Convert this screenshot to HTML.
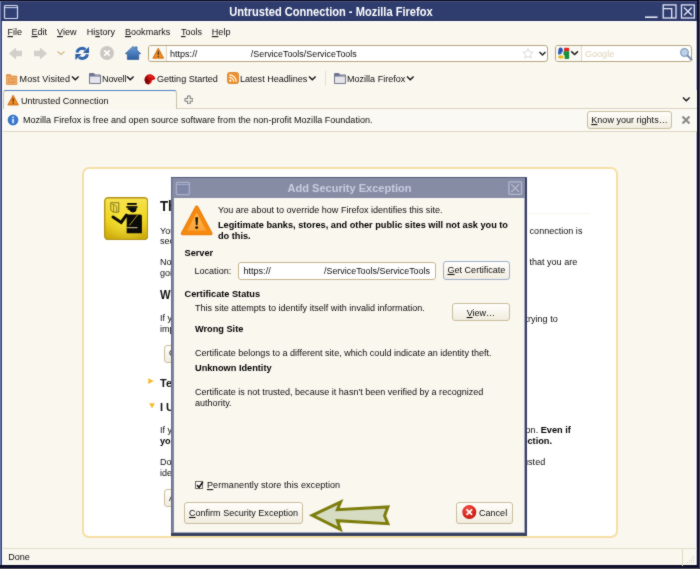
<!DOCTYPE html>
<html><head><meta charset="utf-8"><title>Untrusted Connection - Mozilla Firefox</title>
<style>
html,body{margin:0;padding:0;}
body{width:700px;height:569px;overflow:hidden;position:relative;background:#faf7ef;font-family:"Liberation Sans",sans-serif;font-size:9.05px;color:#0c0c0c;}
.a{position:absolute;white-space:nowrap;}
.t{position:absolute;white-space:nowrap;line-height:12px;transform:scaleY(1.07);transform-origin:0 9px;}
.btn>span{display:inline-block;transform:scaleY(1.07);transform-origin:50% 72%;}
u{text-decoration:underline;}
.b{font-weight:bold;font-size:9.2px;color:#000;}
.btn{position:absolute;box-sizing:border-box;border:1px solid #c9bd9c;border-radius:3px;background:linear-gradient(#fffefb,#f1ecdf);text-align:center;white-space:nowrap;}
body{filter:url(#soft);}
</style></head><body><svg width="0" height="0" style="position:absolute"><defs><filter id="soft" x="0" y="0" width="100%" height="100%" color-interpolation-filters="sRGB"><feConvolveMatrix order="3" kernelMatrix="0.5 1 0.5 1 10 1 0.5 1 0.5" divisor="16" edgeMode="duplicate" preserveAlpha="true"/></filter></defs></svg>
<!-- window frame -->
<div class="a" id="frame" style="left:0;top:0;width:700px;height:569px;background:#0d0f2a;"></div>
<div class="a" style="left:0;top:567.700px;width:700px;height:1.300px;background:#5e606c;"></div>
<div class="a" style="left:698.600px;top:0;width:1.400px;height:569px;background:#464859;"></div>
<div class="a" style="left:0;top:0.800px;width:697px;height:1.200px;background:#4a5278;"></div>
<div class="a" id="titlebar" style="left:0;top:2px;width:697px;height:19px;background:linear-gradient(#2f3c6e 0,#2f3c6e 17.400px,#27325d 17.800px);"></div>
<div class="a" style="left:0;top:1px;width:1px;height:564.300px;background:#6a78aa;"></div>
<div class="a" style="left:1px;top:20.800px;width:1.100px;height:544.500px;background:#2f3b6c;"></div>
<div class="a" id="client" style="left:2.100px;top:20.800px;width:694.300px;height:544.200px;background:#fff;"></div>
<div class="a" style="left:696px;top:20.800px;width:0.900px;height:544.200px;background:#b5b9cc;"></div>
<div class="a" style="left:3.400px;top:21.900px;width:691.400px;height:543.100px;background:#faf7ef;"></div>
<div class="t b" id="title" style="transform-origin:50% 9.700px;left:0;width:662px;top:6px;text-align:center;font-size:11.1px;color:#fff;">Untrusted Connection - Mozilla Firefox</div>
<!-- window icon -->
<svg class="a" style="left:3px;top:4px" width="16" height="16" viewBox="0 0 16 16"><rect x="1.500" y="1.500" width="13" height="13" rx="1" fill="#323f74" stroke="#d6daf0" stroke-width="1.200"/><line x1="2" y1="3.600" x2="14" y2="3.600" stroke="#d6daf0" stroke-width="1"/></svg>
<!-- window buttons -->
<svg class="a" style="left:640px;top:2px" width="58" height="18" viewBox="0 0 58 18"><g fill="none" stroke="#e4e7f6" stroke-width="1.300"><line x1="5" y1="15.200" x2="17.500" y2="15.200" stroke-width="1.600"/><rect x="23.200" y="2.900" width="12.800" height="13.100"/><path d="M23.200 6.700h8.500v9.300"/><rect x="41.500" y="2.900" width="12.800" height="13.100"/><path d="M44 5.500l7.800 7.800M51.800 5.500l-7.800 7.800"/></g></svg>

<!-- menu bar -->
<div class="t" style="left:7.500px;top:25.800px"><u>F</u>ile</div>
<div class="t" style="left:31.500px;top:25.800px"><u>E</u>dit</div>
<div class="t" style="left:57px;top:25.800px"><u>V</u>iew</div>
<div class="t" style="left:86.800px;top:25.800px">Hi<u>s</u>tory</div>
<div class="t" style="left:125px;top:25.800px"><u>B</u>ookmarks</div>
<div class="t" style="left:181px;top:25.800px"><u>T</u>ools</div>
<div class="t" style="left:211.800px;top:25.800px"><u>H</u>elp</div>

<!-- nav toolbar -->
<svg class="a" style="left:6px;top:44px" width="140" height="18" viewBox="0 0 140 18"><defs><linearGradient id="hg" x1="0" y1="0" x2="0" y2="1"><stop offset="0" stop-color="#6b9bd8"/><stop offset="1" stop-color="#2d5e9f"/></linearGradient></defs>
 <path d="M3 9.500l7-6v3.200h6v5.600h-6v3.200z" fill="#d1cfca"/>
 <path d="M41 9.500l-7-6v3.200h-6v5.600h6v3.200z" fill="#d1cfca"/>
 <path d="M51.500 7.500l3.500 3 3.500-3" fill="none" stroke="#d0b680" stroke-width="1.1"/>
 <g id="reload" transform="translate(0,0.400)" fill="none" stroke="#2d64ad" stroke-width="3"><path d="M71 8.200a5.200 5.200 0 0 1 8.500-3"/><path d="M81.400 9.800a5.200 5.200 0 0 1-8.500 3"/><path d="M83 2.300v6.200h-6.200z" fill="#2a5fa6" stroke="none"/><path d="M69.400 15.700v-6.200h6.200z" fill="#2a5fa6" stroke="none"/></g>
 <circle cx="101" cy="9" r="7" fill="#cbc8c3"/><path d="M98.300 6.300l5.400 5.400M103.700 6.300l-5.400 5.400" stroke="#fff" stroke-width="1.700"/>
 <g id="home"><path d="M119.300 9.700l7.800-7.300 2.100 2v-1.500h1.800v3.200l3.800 3.600h-2.100v5.700h-11.300v-5.700z" fill="url(#hg)" stroke="#2b5a9a" stroke-width="0.700" stroke-linejoin="round"/></g>
</svg>
<!-- url bar -->
<div class="a" style="left:148px;top:45px;width:400px;height:17px;box-sizing:border-box;border:1px solid #b5a67e;border-radius:3px;background:#fff;"></div>
<div class="a" style="left:149px;top:46px;width:17.300px;height:15px;background:#fbf9f4;border-right:1px solid #ddd5c0;border-radius:2px 0 0 2px"></div>
<svg class="a" style="left:152px;top:47px" width="12.500" height="12.500" viewBox="0 0 14 14"><path d="M7 1.500L13 12.500H1z" fill="#f08a24" stroke="#c8660c" stroke-width="1" stroke-linejoin="round"/><rect x="6.400" y="5" width="1.300" height="4" fill="#3a2a10"/><rect x="6.400" y="10" width="1.300" height="1.300" fill="#3a2a10"/></svg>
<div class="t" style="left:170px;top:47.500px">https://</div>
<div class="t" style="left:250.800px;top:47.500px;font-size:8.920px">/ServiceTools/ServiceTools</div>
<svg class="a" style="left:520px;top:46px" width="30" height="15" viewBox="0 0 30 15"><path d="M8 2.600l1.500 3.200 3.500.4-2.600 2.400.7 3.500-3.100-1.800-3.100 1.800.7-3.500-2.600-2.400 3.500-.4z" fill="#fff" stroke="#cfcfcf" stroke-width="0.800"/><path d="M19.500 6l3 3 3-3" fill="none" stroke="#222" stroke-width="1.500"/></svg>
<!-- search box -->
<div class="a" style="left:555px;top:45px;width:137px;height:17px;box-sizing:border-box;border:1px solid #b5a67e;border-radius:3px;background:#fff;"></div>
<div class="a" style="left:556px;top:46px;width:25px;height:15px;background:#fbf9f4;border-right:1px solid #e2dac6;border-radius:2px 0 0 2px"></div>
<svg class="a" style="left:557px;top:46px" width="26" height="15" viewBox="0 0 26 15"><ellipse cx="3.600" cy="4.200" rx="2.200" ry="2.700" fill="#2456b8"/><path d="M0.800 5.300l4.200 2.400-3.600 1z" fill="#2456b8"/><ellipse cx="3.800" cy="11" rx="2.800" ry="1.700" fill="#e9b818"/><path d="M7.200 1.700h4a1 1 0 0 1 1 1v2.800h-5.200z" fill="#e0281e"/><path d="M6.600 5.300h5.600v6.600a1 1 0 0 1-1 1h-3.600v-3.500l-1.200-1z" fill="#17903a"/><path d="M14.300 5.400l3.300 3.100 3.300-3.100" fill="none" stroke="#1a1a1a" stroke-width="1.500"/></svg>
<div class="t" style="left:585px;top:47.500px;color:#dbd2b6">Google</div>
<svg class="a" style="left:678.500px;top:46.500px" width="14" height="14" viewBox="0 0 14 14"><circle cx="5.500" cy="5.500" r="3.800" fill="#bcd2ea" stroke="#8aa0bd" stroke-width="1.300"/><path d="M8.500 8.500l4 4" stroke="#7a8fae" stroke-width="2" stroke-linecap="round"/></svg>

<!-- bookmarks toolbar -->
<svg class="a" style="left:5.200px;top:72px" width="14" height="14" viewBox="0 0 14 14"><path d="M1.600 2.600h3.800l1 1.500h5.400v8.300h-10.200z" fill="#eb9d55" stroke="#d98a3e" stroke-width="0.800"/><path d="M2.200 5h9v6.800h-9z" fill="#f2b377"/><rect x="3.700" y="6.300" width="6.200" height="4.300" fill="none" stroke="#d98a3e" stroke-width="0.800"/><circle cx="6.800" cy="8.500" r="1.200" fill="none" stroke="#d98a3e" stroke-width="0.700"/></svg>
<div class="t" style="left:19.500px;top:73.400px;letter-spacing:0.130px">Most Visited</div>
<svg class="a" style="left:71px;top:75px" width="9" height="7" viewBox="0 0 9 7"><path d="M1 1.500l3.300 3.300 3.300-3.300" fill="none" stroke="#111" stroke-width="1.350"/></svg>
<svg class="a" style="left:88px;top:71px" width="14" height="14" viewBox="0 0 14 14"><path d="M1.500 2.500h4.500l1 1.500h5.500v8.500h-11z" fill="#e4e4ea" stroke="#666a82" stroke-width="0.900"/><path d="M1.900 2.900h4l1 1.500h5.200v1.200h-10.200z" fill="#6d7292"/></svg>
<div class="t" style="left:102px;top:73.400px;letter-spacing:-0.150px">Novell</div>
<svg class="a" style="left:126px;top:75px" width="9" height="7" viewBox="0 0 9 7"><path d="M1 1.500l3.300 3.300 3.300-3.300" fill="none" stroke="#111" stroke-width="1.350"/></svg>
<svg class="a" style="left:143px;top:72px" width="14" height="14" viewBox="0 0 14 14"><path d="M1.600 8.500c-.3-3.200 2-6 5-6.200 2.300-.1 4 1.300 5.800 3.700l-.5 1.300-3 1.200-.8 2.600-2.600 1.300-2.600-.8z" fill="#cf0c0c"/><path d="M1.600 8.500c0-1.800.8-3.800 2-4.800l.6 3.300 2.300 1.500-1 3.900-2.600-.8z" fill="#7d0505"/><path d="M6 4.200l2.500.6 1.700 1.600" fill="none" stroke="#f04a3a" stroke-width="0.800"/></svg>
<div class="t" style="left:157px;top:73.400px">Getting Started</div>
<svg class="a" style="left:227px;top:72px" width="12" height="12" viewBox="0 0 12 12"><rect x="0.500" y="0.500" width="11" height="11" rx="2" fill="#f0902a" stroke="#d0721a" stroke-width="0.700"/><circle cx="3.300" cy="8.700" r="1.100" fill="#fff"/><path d="M2.200 5.300a4.500 4.500 0 0 1 4.500 4.500M2.200 2.800a7 7 0 0 1 7 7" fill="none" stroke="#fff" stroke-width="1.200"/></svg>
<div class="t" style="left:240px;top:73.400px">Latest Headlines</div>
<svg class="a" style="left:308px;top:75px" width="9" height="7" viewBox="0 0 9 7"><path d="M1 1.500l3.300 3.300 3.300-3.300" fill="none" stroke="#111" stroke-width="1.350"/></svg>
<div class="a" style="left:324.600px;top:71px;width:1px;height:15px;background:#e6dfcd"></div>
<svg class="a" style="left:333px;top:71px" width="14" height="14" viewBox="0 0 14 14"><path d="M1.500 2.500h4.500l1 1.500h5.500v8.500h-11z" fill="#e4e4ea" stroke="#666a82" stroke-width="0.900"/><path d="M1.900 2.900h4l1 1.500h5.200v1.200h-10.200z" fill="#6d7292"/></svg>
<div class="t" style="left:347px;top:73.400px">Mozilla Firefox</div>
<svg class="a" style="left:406px;top:75px" width="9" height="7" viewBox="0 0 9 7"><path d="M1 1.500l3.300 3.300 3.300-3.300" fill="none" stroke="#111" stroke-width="1.350"/></svg>

<!-- tab bar -->
<div class="a" style="left:3px;top:90px;width:694px;height:19px;background:#faf7ef;"></div>
<div class="a" style="left:3px;top:108px;width:694px;height:1px;background:#d9d2bf;"></div>
<div class="a" id="tab" style="left:3px;top:90px;width:174px;height:19px;box-sizing:border-box;background:#faf7ef;border:1px solid #c9c0a8;border-bottom:none;border-top:1.700px solid #4f80c2;border-radius:3px 3px 0 0;"></div>
<svg class="a" style="left:6.860px;top:94.400px" width="12.250" height="12.250" viewBox="0 0 14 14"><path d="M7 1.500L13 12.500H1z" fill="#f08a24" stroke="#c8660c" stroke-width="1" stroke-linejoin="round"/><rect x="6.400" y="5" width="1.300" height="4" fill="#3a2a10"/><rect x="6.400" y="10" width="1.300" height="1.300" fill="#3a2a10"/></svg>
<div class="t" style="left:21px;top:95px">Untrusted Connection</div>
<svg class="a" style="left:183.600px;top:94.600px" width="9.800" height="9.800" viewBox="0 0 11 11"><path d="M4 1h3v3h3v3h-3v3h-3v-3h-3v-3h3z" fill="#f1eee6" stroke="#6f6d68" stroke-width="1"/></svg>
<svg class="a" style="left:682px;top:96px" width="9" height="7" viewBox="0 0 9 7"><path d="M1 1.500l3.300 3.300 3.300-3.300" fill="none" stroke="#111" stroke-width="1.350"/></svg>

<!-- notification bar -->
<div class="a" style="left:3px;top:109px;width:694px;height:22px;background:#fbf9f3;border-bottom:1px solid #ddd5c0;"></div>
<svg class="a" style="left:7px;top:113.500px" width="12" height="12" viewBox="0 0 12 12"><circle cx="6" cy="6" r="5.200" fill="#3b7bd0"/><circle cx="6" cy="6" r="4.800" fill="none" stroke="#2f68b4" stroke-width="0.700"/><rect x="5.300" y="5" width="1.500" height="4.200" fill="#fff"/><rect x="5.300" y="2.600" width="1.500" height="1.500" fill="#fff"/></svg>
<div class="t" style="left:23px;top:114px">Mozilla Firefox is free and open source software from the non-profit Mozilla Foundation.</div>
<div class="btn" style="left:587px;top:111px;width:85px;height:18px;line-height:16px;"><span><u>K</u>now your rights…</span></div>
<svg class="a" style="left:681px;top:115px" width="10" height="10" viewBox="0 0 10 10"><path d="M1.500 1.500l7 7M8.500 1.500l-7 7" stroke="#8b8b88" stroke-width="2.200"/></svg>

<!-- content -->
<div class="a" id="panel" style="left:82px;top:167.400px;width:535.500px;height:370.300px;box-sizing:border-box;border:2px solid #f5dfa4;border-radius:7px;background:#fff;"></div>
<!-- passport officer icon -->
<svg class="a" style="left:103.800px;top:196.900px" width="44.400" height="43.300" viewBox="0 0 44.400 43.300"><defs><linearGradient id="yg" x1="0" y1="0" x2="0" y2="1"><stop offset="0" stop-color="#f6e352"/><stop offset="0.500" stop-color="#ecd21c"/><stop offset="1" stop-color="#c9a70c"/></linearGradient><radialGradient id="yh" cx="0.500" cy="0.550" r="0.550"><stop offset="0" stop-color="#fff04a" stop-opacity="0.750"/><stop offset="1" stop-color="#fff04a" stop-opacity="0"/></radialGradient></defs>
<rect x="0.700" y="0.700" width="43" height="41.900" rx="3.500" fill="url(#yg)" stroke="#b3941a" stroke-width="1.400"/><rect x="1.400" y="1.400" width="41.600" height="40.500" rx="3" fill="url(#yh)"/>
<g fill="#0b0b0b"><rect x="23.200" y="6" width="9.500" height="1.900"/><rect x="22.400" y="9.100" width="11" height="1.750"/><path d="M25 10.850h7.600v0.800a3.800 3.800 0 0 1-7.200 1.600l-2.400-1.300z"/>
<path d="M22.700 36.200V20l-1.500-2.500h15.200a1.500 1.500 0 0 1 1.500 1.500V36.200z"/>
<path d="M9 20.100L17.200 25.400L22.400 18.200" fill="none" stroke="#0b0b0b" stroke-width="3" stroke-linecap="round" stroke-linejoin="miter"/></g>
<path d="M34 17.400L25.400 28.500" stroke="#ecd21c" stroke-width="0.700" fill="none"/><path d="M22.700 30.700h10.800" stroke="#f5e8a0" stroke-width="0.900" fill="none"/>
<path d="M6.800 5.700h8v9.500h-5.300l-2.700-2.200z" fill="#f1dc48" stroke="#5a500c" stroke-width="0.700"/><path d="M7.800 7l3.500 1.300 1.400 1.700v5M9.600 15V8.200" fill="none" stroke="#5a500c" stroke-width="0.600"/>
</svg>
<!-- page text visible around the dialog -->
<div class="a" style="left:160px;top:213px;width:430px;height:1px;background:#f6f4ee"></div>
<div class="t b" style="left:160px;top:198.500px;font-size:13.300px;line-height:16px;transform-origin:0 12.400px;color:#111">This Connection is Untrusted</div>
<div class="t" style="left:160px;top:224.500px">You have asked Firefox to connect securely to this site, but we can't confirm that your</div>
<div class="t" style="right:117.600px;top:224.500px">connection is</div>
<div class="t" style="left:160px;top:235px">secure.</div>
<div class="t" style="left:160px;top:256px">Normally, when you try to connect securely, sites will present trusted identification to prove</div>
<div class="t" style="right:122.800px;top:256px">that you are</div>
<div class="t" style="left:160px;top:266.500px">going to the right place.</div>
<div class="t b" style="left:160px;top:288px;font-size:11.200px;line-height:14px;transform-origin:0 10.700px;color:#111">What Should I Do?</div>
<div class="t" style="left:160px;top:312px">If you usually connect to this site without problems, this error could mean that someone is</div>
<div class="t" style="right:142.300px;top:313px">trying to</div>
<div class="t" style="left:160px;top:322.500px">impersonate the site.</div>
<div class="btn" style="left:164px;top:345px;width:80px;height:17.500px;line-height:15.500px;text-align:left;padding-left:4px"><span>Get me out of here!</span></div>
<svg class="a" style="left:147px;top:377px" width="8" height="8" viewBox="0 0 8 8"><path d="M1.300 1.300l5.400 2.800-5.400 2.800z" fill="#f7b92c"/></svg>
<div class="t b" style="left:160px;top:375.500px;font-size:11px;line-height:14px;transform-origin:0 10.600px;color:#111">Technical Details</div>
<svg class="a" style="left:147.500px;top:401.500px" width="8" height="8" viewBox="0 0 8 8"><path d="M1.200 1.200l2.800 5.400 2.800-5.400z" fill="#f7b92c"/></svg>
<div class="t b" style="left:160px;top:399.500px;font-size:11px;line-height:14px;transform-origin:0 10.600px;color:#111">I Understand the Risks</div>
<div class="t" style="left:160px;top:424px">If you understand what's going on, you can tell Firefox to start trusting this site's</div>
<div class="t" style="right:129.200px;top:424px">identification. <b class="b">Even if</b></div>
<div class="t b" style="left:160px;top:434.500px">you trust the site, this error could mean that someone is</div>
<div class="t b" style="right:148px;top:434.500px">tampering with your connection.</div>
<div class="t" style="left:160px;top:456px">Don't add an exception unless you know there's a good reason why this</div>
<div class="t" style="right:154.800px;top:456px">site doesn't use trusted</div>
<div class="t" style="left:160px;top:466.500px">identification.</div>
<div class="btn" style="left:164px;top:488.500px;width:70px;height:18px;line-height:16px;text-align:left;padding-left:4px"><span>Add Exception…</span></div>

<!-- status bar -->
<div class="a" style="left:3px;top:548px;width:694px;height:1px;background:#e3dcc6"></div>
<div class="t" style="left:8.200px;top:551px">Done</div>
<div class="a" style="left:682px;top:549px;width:1px;height:17px;background:#e0d8c0"></div>
<svg class="a" style="left:685px;top:554px" width="11" height="11" viewBox="0 0 11 11"><g fill="#d9d2bf"><rect x="8" y="2" width="1" height="1"/><rect x="6" y="4" width="1" height="1"/><rect x="8" y="4" width="1" height="1"/><rect x="4" y="6" width="1" height="1"/><rect x="6" y="6" width="1" height="1"/><rect x="8" y="6" width="1" height="1"/><rect x="2" y="8" width="1" height="1"/><rect x="4" y="8" width="1" height="1"/><rect x="6" y="8" width="1" height="1"/><rect x="8" y="8" width="1" height="1"/></g></svg>

<!-- dialog -->
<div class="a" id="dlg" style="left:171.400px;top:177.300px;width:355.600px;height:358.300px;background:#394060;"></div>
<div class="a" style="left:171.400px;top:177.300px;width:354px;height:356px;background:linear-gradient(90deg,#5c6384 0,#7b819d 1.400px,#878ca5 2.800px);"></div>
<div class="a" style="left:171.400px;top:177.300px;width:355.600px;height:0.900px;background:#50577a;"></div>
<div class="a" id="dlgtitle" style="left:172.600px;top:178.200px;width:352.600px;height:19.300px;background:#878ca5;"></div>
<div class="a" style="left:174.200px;top:197.500px;width:351px;height:335.600px;background:#a9adc3;"></div>
<div class="a" id="dlgbody" style="left:174.200px;top:197.500px;width:350.100px;height:334.900px;background:#faf7ef;"></div>
<div class="t b" style="left:173px;width:353px;top:182px;transform-origin:50% 9.700px;text-align:center;font-size:11.050px;color:#c9cde0;">Add Security Exception</div>
<svg class="a" style="left:175px;top:181px" width="16" height="15" viewBox="0 0 16 15"><rect x="1.400" y="1.300" width="13" height="12.300" rx="1" fill="#7f87a9" stroke="#aab0cb" stroke-width="1.300"/><line x1="2" y1="3.400" x2="14" y2="3.400" stroke="#aab0cb" stroke-width="1"/></svg>
<svg class="a" style="left:507px;top:180px" width="17" height="16" viewBox="0 0 17 16"><g fill="none" stroke="#b4b9d2" stroke-width="1.300"><rect x="1.900" y="1.800" width="12.600" height="12.500" rx="0.800"/><path d="M4.300 4.200l7.800 7.800M12.100 4.200l-7.800 7.800"/></g></svg>
<!-- warning big -->
<svg class="a" style="left:179px;top:203px" width="36" height="34" viewBox="0 0 36 34"><defs><linearGradient id="og" x1="0" y1="0" x2="0" y2="1"><stop offset="0" stop-color="#fcbb5c"/><stop offset="1" stop-color="#f9a234"/></linearGradient></defs><path d="M17.700 4.300L31.800 30.500H3.600z" fill="#f6890f" stroke="#e37b10" stroke-width="3.600" stroke-linejoin="round"/><path d="M17.700 4.700L31.400 30.200H4z" fill="#f6890f" stroke="#f6890f" stroke-width="2.400" stroke-linejoin="round"/><path d="M17.700 9.700L27.300 27.800H8.100z" fill="url(#og)"/><path d="M16.300 14.300h2.800l-.6 7.800h-1.600z" fill="#1e1203"/><circle cx="17.700" cy="24.600" r="1.450" fill="#1e1203"/></svg>
<div class="t" style="left:218px;top:204px">You are about to override how Firefox identifies this site.</div>
<div class="t b" style="left:218px;top:219.500px;line-height:10.450px;transform-origin:0 8.300px;">Legitimate banks, stores, and other public sites will not ask you to<br>do this.</div>
<div class="t b" style="left:184.500px;top:247px">Server</div>
<div class="t" style="left:194.500px;top:265px">Location:</div>
<div class="a" style="left:238px;top:262px;width:197.600px;height:17.500px;box-sizing:border-box;border:1px solid #c4b68e;border-radius:3px;background:#fff;"></div>
<div class="t" style="left:243.500px;top:265px">https://</div>
<div class="t" style="left:324px;top:265px;font-size:8.920px">/ServiceTools/ServiceTools</div>
<div class="btn" style="left:443px;top:261.200px;width:66.800px;height:18.500px;line-height:17.500px;border-color:#9db0ca"><span><u>G</u>et Certificate</span></div>
<div class="t b" style="left:184.500px;top:288px">Certificate Status</div>
<div class="t" style="left:195px;top:302px">This site attempts to identify itself with invalid information.</div>
<div class="btn" style="left:452px;top:302.600px;width:57.800px;height:18.100px;line-height:18.500px;"><span><u>V</u>iew…</span></div>
<div class="t b" style="left:195px;top:323px">Wrong Site</div>
<div class="t" style="left:195px;top:347px">Certificate belongs to a different site, which could indicate an identity theft.</div>
<div class="t b" style="left:195px;top:361.500px">Unknown Identity</div>
<div class="t" style="left:195px;top:386.600px;line-height:10.370px;transform-origin:0 8.200px;">Certificate is not trusted, because it hasn't been verified by a recognized<br>authority.</div>
<!-- checkbox -->
<div class="a" style="left:194.600px;top:480.600px;width:8.800px;height:8.600px;box-sizing:border-box;border:1px solid #6f6a5c;background:#fff;"></div>
<svg class="a" style="left:194.500px;top:479.500px" width="10" height="10" viewBox="0 0 10 10"><path d="M2 5l2 2.500 3.800-5.500" fill="none" stroke="#111" stroke-width="1.600"/></svg>
<div class="t" style="left:207px;top:478.500px;letter-spacing:0.060px"><u>P</u>ermanently store this exception</div>
<div class="btn" style="left:184px;top:501.500px;width:119px;height:22.500px;line-height:20px;"><span><u>C</u>onfirm Security Exception</span></div>
<div class="btn" style="left:455.500px;top:501.500px;width:57.500px;height:22.500px;line-height:20.500px;text-align:left;padding-left:22.500px"><span>Cancel</span></div>
<svg class="a" style="left:461px;top:504px" width="16" height="16" viewBox="0 0 16 16"><defs><radialGradient id="rg" cx="0.400" cy="0.300" r="0.800"><stop offset="0" stop-color="#f0564a"/><stop offset="0.600" stop-color="#d8261c"/><stop offset="1" stop-color="#b0160e"/></radialGradient></defs><circle cx="8.300" cy="8.100" r="7" fill="url(#rg)"/><path d="M5.500 5.300l5.600 5.600M11.100 5.300l-5.600 5.600" stroke="#fff" stroke-width="1.700"/></svg>
<!-- arrow annotation -->
<svg class="a" style="left:300px;top:490px" width="100" height="50" viewBox="0 0 100 50"><path d="M12.200 25.400L40.600 12.000L37.400 19.700L87.900 16.900L84.600 25.700L87.900 33.700L37.400 30.700L40.300 39.400z" fill="#d6dcc2" stroke="#7d7d0c" stroke-width="3" stroke-linejoin="miter" stroke-miterlimit="10"/></svg>
</body></html>
